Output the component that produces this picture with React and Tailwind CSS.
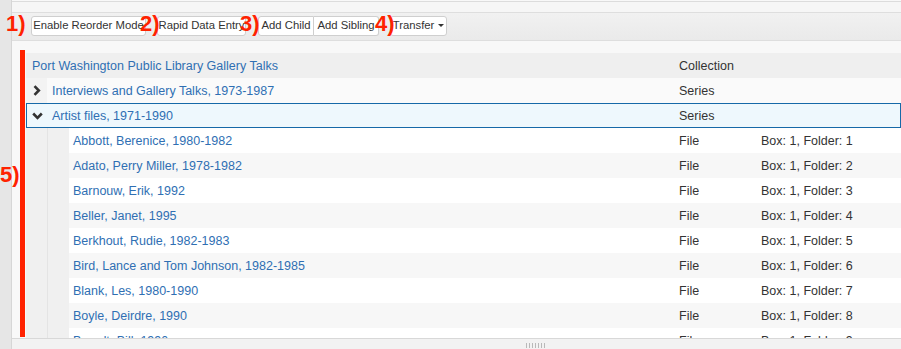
import React from 'react';

const LINK = 'text-[#2f6fb3]';

const files = [
  ['Abbott, Berenice, 1980-1982', 1],
  ['Adato, Perry Miller, 1978-1982', 2],
  ['Barnouw, Erik, 1992', 3],
  ['Beller, Janet, 1995', 4],
  ['Berkhout, Rudie, 1982-1983', 5],
  ['Bird, Lance and Tom Johnson, 1982-1985', 6],
  ['Blank, Les, 1980-1990', 7],
  ['Boyle, Deirdre, 1990', 8],
  ['Brandt, Bill, 1990', 9],
];

function ChevronRight() {
  return (
    <svg width="8" height="11" viewBox="0 0 8 11">
      <polyline points="1.5,1.2 5.8,5.5 1.5,9.8" fill="none" stroke="#333" strokeWidth="2.6" />
    </svg>
  );
}

function ChevronDown() {
  return (
    <svg width="11" height="8" viewBox="0 0 11 8">
      <polyline points="1.2,1.5 5.5,5.8 9.8,1.5" fill="none" stroke="#333" strokeWidth="2.6" />
    </svg>
  );
}

function Cols({ type, loc }) {
  return (
    <>
      <div className="w-[82px] shrink-0 text-[#333]">{type}</div>
      <div className="w-[140px] shrink-0 text-[#333] whitespace-nowrap">{loc}</div>
    </>
  );
}

function Btn({ w, children, className = '' }) {
  return (
    <div
      className={`h-[20px] ${w} flex items-center justify-center bg-white border border-[#cfcfcf] text-[11.3px] text-[#333] whitespace-nowrap ${className}`}
    >
      {children}
    </div>
  );
}

function Mark({ children, className }) {
  return (
    <div className={`absolute text-[22px] leading-none font-bold text-[#ff2200] ${className}`}>{children}</div>
  );
}

export default function App() {
  return (
    <div className="relative w-[901px] h-[349px] overflow-hidden flex bg-[#e5e5e5] font-['Liberation_Sans',Arial,sans-serif]">
      <div className="w-[11px] shrink-0 bg-[#e6e6e6]" />
      <div className="flex-1 flex flex-col border-l border-[#d6d6d6] bg-[#f8f8f8]">
        <div className="h-[11px] shrink-0 bg-[#f6f6f6] border-t border-[#dcdcdc] mt-px" />
        <div className="h-[29px] shrink-0 flex items-center border-t border-b border-[#dedede] bg-gradient-to-b from-[#f1f1f1] to-[#eaeaea] pl-[19px] pb-[2px]">
          <Btn w="w-[115px]" className="rounded-[3px]">Enable Reorder Mode</Btn>
          <Btn w="w-[89px]" className="rounded-[3px] ml-[11px]">Rapid Data Entry</Btn>
          <Btn w="w-[56px]" className="rounded-l-[3px] ml-[12px]">Add Child</Btn>
          <Btn w="w-[65px]" className="rounded-r-[3px] border-l-0">Add Sibling</Btn>
          <Btn w="w-[57px]" className="rounded-[3px] ml-[11px] gap-[4px]">
            Transfer
            <span className="w-0 h-0 border-l-[3px] border-r-[3px] border-t-[3px] border-l-transparent border-r-transparent border-t-[#333]" />
          </Btn>
        </div>

        <div className="flex-1 overflow-hidden pt-[12px] pl-[14px] text-[12.5px]">
          <div className="h-[25px] flex items-center pt-[2px] bg-[#efefef]">
            <div className={`flex-1 pl-[6px] ${LINK}`}>Port Washington Public Library Gallery Talks</div>
            <Cols type="Collection" loc="" />
          </div>
          <div className="h-[25px] flex bg-[#fafafa]">
            <div className="w-[21px] flex items-center justify-center bg-[#f3f3f3]">
              <ChevronRight />
            </div>
            <div className="flex-1 flex items-center pt-[2px]">
              <div className={`flex-1 pl-[5px] ${LINK}`}>Interviews and Gallery Talks, 1973-1987</div>
              <Cols type="Series" loc="" />
            </div>
          </div>
          <div className="h-[25px] flex border border-[#1669a8] bg-[#eef8fd]">
            <div className="w-[20px] flex items-center justify-center pl-px">
              <ChevronDown />
            </div>
            <div className="flex-1 flex items-center pt-[2px]">
              <div className={`flex-1 pl-[5px] ${LINK}`}>Artist files, 1971-1990</div>
              <div className="w-[82px] shrink-0 text-[#333]">Series</div>
              <div className="w-[139px] shrink-0" />
            </div>
          </div>
          {files.map(([title, n], i) => (
            <div key={n} className="h-[25px] flex">
              <div className="w-[22px] bg-[#f0f0f0] border-r border-[#e4e4e4]" />
              <div className="w-[21px] bg-[#f0f0f0]" />
              <div className={`flex-1 flex items-center pt-[2px] ${i % 2 ? 'bg-[#f7f7f7]' : 'bg-white'}`}>
                <div className={`flex-1 pl-[4px] whitespace-nowrap ${LINK}`}>{title}</div>
                <Cols type="File" loc={`Box: 1, Folder: ${n}`} />
              </div>
            </div>
          ))}
        </div>

        <div className="h-[11px] shrink-0 border-t border-[#d8d8d8] bg-[#f2f2f2] flex items-center pl-[514px]">
          <div className="flex gap-[2px] h-[5px] mt-[2px]">
            {[0, 1, 2, 3, 4, 5, 6].map((k) => (
              <div key={k} className="w-px h-full bg-[#b9b9b9]" />
            ))}
          </div>
        </div>
      </div>

      <div className="absolute left-[20px] top-[50px] w-[5px] h-[287px] bg-[#ff2200]" />
      <Mark className="left-[6px] top-[13px]">1)</Mark>
      <Mark className="left-[140px] top-[13px]">2)</Mark>
      <Mark className="left-[240px] top-[13px]">3)</Mark>
      <Mark className="left-[375px] top-[13px]">4)</Mark>
      <Mark className="left-0 top-[164px]">5)</Mark>
    </div>
  );
}
